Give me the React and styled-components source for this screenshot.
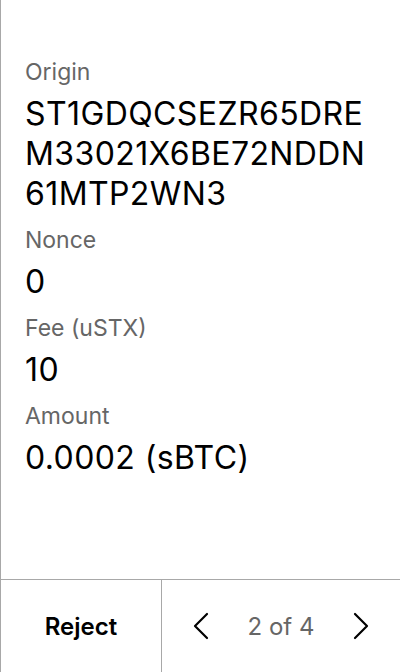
import React from "react";
import styled, { createGlobalStyle } from "styled-components";

const GlobalStyle = createGlobalStyle`
  html, body {
    margin: 0;
    padding: 0;
    background: #fff;
  }
  body {
    font-family: Inter, "Noto Sans", sans-serif;
  }
`;

const Screen = styled.div`
  display: flex;
  flex-direction: column;
  width: 400px;
  height: 672px;
  box-sizing: border-box;
  border-left: 1px solid #a8a8a8;
`;

const Content = styled.div`
  flex: 1;
  display: flex;
  flex-direction: column;
  padding: 58px 24px 0 24px;
`;

const Label = styled.div`
  color: #666;
  font-size: 23px;
  line-height: 28px;
  margin-bottom: 8px;
`;

const Value = styled.div`
  color: #000;
  font-size: 32px;
  line-height: 40px;
  margin-bottom: 12px;
  letter-spacing: 0.4px;
`;

const ValueLine = styled.div`
  white-space: nowrap;
`;

const Footer = styled.div`
  display: flex;
  height: 92px;
  border-top: 1px solid #a8a8a8;
`;

const RejectButton = styled.div`
  display: flex;
  align-items: center;
  justify-content: center;
  width: 160px;
  border-right: 1px solid #a8a8a8;
  font-size: 24px;
  font-weight: 600;
  color: #000;
`;

const Pager = styled.div`
  flex: 1;
  display: flex;
  align-items: center;
  justify-content: space-between;
  padding: 0 31px 0 31px;
`;

const PageText = styled.span`
  font-size: 24px;
  color: #666;
`;

const Chevron = ({ dir }) => (
  <svg width="16" height="28" viewBox="0 0 16 28" fill="none">
    <path
      d={dir === "left" ? "M14 2 L2 14 L14 26" : "M2 2 L14 14 L2 26"}
      stroke="#000"
      strokeWidth="2.2"
      strokeLinecap="round"
      strokeLinejoin="round"
    />
  </svg>
);

const fields = [
  { label: "Origin", value: ["ST1GDQCSEZR65DRE", "M33021X6BE72NDDN", "61MTP2WN3"] },
  { label: "Nonce", value: ["0"] },
  { label: "Fee (uSTX)", value: ["10"] },
  { label: "Amount", value: ["0.0002 (sBTC)"] },
];

export default function App() {
  return (
    <>
      <GlobalStyle />
      <Screen>
        <Content>
          {fields.map((f) => (
            <React.Fragment key={f.label}>
              <Label>{f.label}</Label>
              <Value>
                {f.value.map((line) => (
                  <ValueLine key={line}>{line}</ValueLine>
                ))}
              </Value>
            </React.Fragment>
          ))}
        </Content>
        <Footer>
          <RejectButton>Reject</RejectButton>
          <Pager>
            <Chevron dir="left" />
            <PageText>2 of 4</PageText>
            <Chevron dir="right" />
          </Pager>
        </Footer>
      </Screen>
    </>
  );
}
